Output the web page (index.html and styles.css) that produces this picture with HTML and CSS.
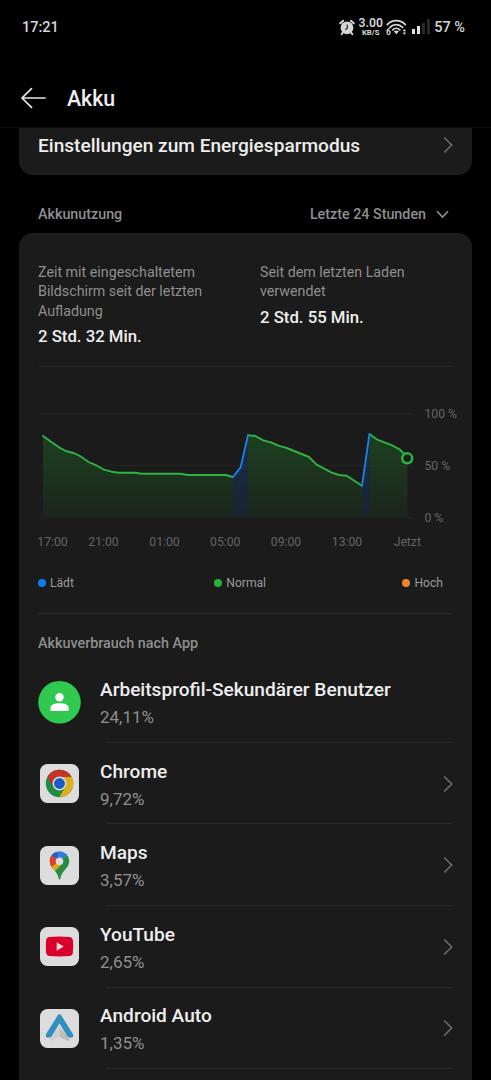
FILE: index.html
```html
<!DOCTYPE html>
<html lang="de">
<head>
<meta charset="utf-8">
<title>Akku</title>
<link rel="stylesheet" href="styles.css">
</head>
<body>
<div class="statusbar">
  <span class="clock">17:21</span>
  <div class="status-icons">
    <svg class="alarm" width="16" height="17" viewBox="0 0 16 17"><circle cx="8" cy="8.800" r="6.400" fill="#d6d6d6"/><path d="M1.200 4.300 4.200 1.700M14.800 4.300l-3-2.600M3.800 13.500 2.700 15.300M12.200 13.500l1.100 1.800" stroke="#d6d6d6" stroke-width="1.900" stroke-linecap="round"/><path d="M8.300 5.400v3.800L6.300 10.900" fill="none" stroke="#222" stroke-width="1.200"/></svg>
    <div class="speed"><b>3.00</b><small>KB/S</small></div>
    <svg class="wifi" width="21" height="17" viewBox="0 0 21 17"><g fill="none" stroke="#d6d6d6" stroke-width="1.800" stroke-linecap="round"><path d="M1.300 5.600C6 .4 14.500.4 19.300 5.600M4 8.300c3.500-3.700 9-3.700 12.600 0M6.800 10.900c2-2 5-2 7 0"/></g><path d="M7.700 12.300c1.500-1.200 3.800-1.200 5.300 0L10.300 15.200z" fill="#d6d6d6"/><path d="M16.500 12.300l1.900-2.200 1.900 2.200zM16.500 13.500h3.800l-1.900 2.200z" fill="#d6d6d6"/><text x="0" y="16" class="wifi-gen">6</text></svg>
    <svg class="signal" width="18" height="16" viewBox="0 0 18 16"><path d="M0 10h3v5H0zM5 7h3v8H5z" fill="#e2e2e2"/><path d="M10 4h3v11h-3zM15 0h3v15h-3z" fill="#282828"/></svg>
    <span class="percent">57 %</span>
  </div>
</div>
<header class="header">
  <svg width="26" height="22" viewBox="0 0 26 22"><path d="M10.500 1.600 1 11 10.500 20.400M1 11H24" fill="none" stroke="#e8e8e8" stroke-width="1.700" stroke-linecap="round" stroke-linejoin="round"/></svg>
  <h1>Akku</h1>
</header>
<main>
  <section class="card saver">
    <span>Einstellungen zum Energiesparmodus</span>
    <svg class="chevron" width="10" height="18" viewBox="0 0 10 18"><path d="M1.200 1.500 8.700 9l-7.500 7.500"/></svg>
  </section>
  <div class="section-head">
    <span>Akkunutzung</span>
    <div class="range"><span>Letzte 24 Stunden</span><svg width="13" height="9" viewBox="0 0 13 9"><path d="M1 1.300 6.500 7 12 1.300" fill="none" stroke="#929292" stroke-width="1.600"/></svg></div>
  </div>
  <section class="card usage">
    <div class="stats">
      <div><p>Zeit mit eingeschaltetem<br>Bildschirm seit der letzten<br>Aufladung</p><strong>2 Std. 32 Min.</strong></div>
      <div><p>Seit dem letzten Laden<br>verwendet</p><strong>2 Std. 55 Min.</strong></div>
    </div>
    <svg class="chart" width="425" height="190" viewBox="38 367 425 190">
      <defs>
        <linearGradient id="green" gradientUnits="userSpaceOnUse" x1="0" y1="434" x2="0" y2="517"><stop offset="0" stop-color="#1d4120"/><stop offset="1" stop-color="#1b251c"/></linearGradient>
        <linearGradient id="blue" gradientUnits="userSpaceOnUse" x1="0" y1="434" x2="0" y2="517"><stop offset="0" stop-color="#19304e"/><stop offset="1" stop-color="#1a2230"/></linearGradient>
      </defs>
      <g fill="url(#green)">
        <path d="M43 517V436L51 441.700 59 447.300 65.700 451 73.700 453 81 456.700 88.700 462 96.300 465.300 104 469.700 111.700 471.700 118.300 472.700H135L141.700 473.700H180.300L187.700 475H225.700L233 477V517z"/>
        <path d="M248 517V435.300L255.300 436 263.300 440.300 271 442.300 278.300 445.700 286.700 448 309 457 316.300 464.300 331.700 472.700 339 475 346.700 475.700 354.300 480.700 362 485.700V517z"/>
        <path d="M369.500 517V434L376.700 439.300 392.700 445.700 400 449.700 407.500 458V517z"/>
      </g>
      <g fill="url(#blue)"><path d="M233 517V477L240.500 467.700 248 435.300V517zM362 517V485.700L369.500 434V517z"/></g>
      <path d="M38 413.500H413M38 465.500H413M38 517.500H413" stroke="#fff" stroke-opacity=".04"/>
      <g fill="none" stroke-width="1.900" stroke-linejoin="round" stroke-linecap="round">
        <g stroke="#2fb344">
          <path d="M43 436 51 441.700 59 447.300 65.700 451 73.700 453 81 456.700 88.700 462 96.300 465.300 104 469.700 111.700 471.700 118.300 472.700H135L141.700 473.700H180.300L187.700 475H225.700L233 477"/>
          <path d="M248 435.300 255.300 436 263.300 440.300 271 442.300 278.300 445.700 286.700 448 309 457 316.300 464.300 331.700 472.700 339 475 346.700 475.700 354.300 480.700 362 485.700"/>
          <path d="M369.500 434 376.700 439.300 392.700 445.700 400 449.700 403.700 453.500"/>
        </g>
        <path d="M233 477 240.500 467.700 248 435.300M362 485.700 369.500 434" stroke="#1b7fe6"/>
      </g>
      <circle cx="407.200" cy="458.300" r="5" fill="#1b1f1b" stroke="#2fb344" stroke-width="2.500"/>
      <g class="axis">
        <text x="424.500" y="418">100 %</text><text x="424.500" y="470">50 %</text><text x="424.500" y="522">0 %</text>
        <g text-anchor="middle"><text x="52.500" y="546">17:00</text><text x="103.500" y="546">21:00</text><text x="164.500" y="546">01:00</text><text x="225.300" y="546">05:00</text><text x="286" y="546">09:00</text><text x="347" y="546">13:00</text><text x="407.300" y="546">Jetzt</text></g>
      </g>
    </svg>
    <div class="legend">
      <span class="key charging">Lädt</span><span class="key normal">Normal</span><span class="key high">Hoch</span>
    </div>
    <h2>Akkuverbrauch nach App</h2>
    <div class="apps">
      <div class="app">
        <svg class="icon" width="43" height="43" viewBox="0 0 43 43"><circle cx="21.500" cy="21.300" r="21.300" fill="#2fc94f"/><circle cx="21.500" cy="16.300" r="4.200" fill="#fff"/><path d="M12.500 30V26.700C12.500 20.900 30.600 20.900 30.600 26.700V30z" fill="#fff"/></svg>
        <div class="info"><b>Arbeitsprofil-Sekundärer Benutzer</b><span>24,11%</span></div>
      </div>
      <div class="app">
        <svg class="icon" width="43" height="43" viewBox="0 0 43 43"><rect x="2" y="2" width="39" height="39" rx="7.500" fill="#dcdcdc"/><circle cx="21.500" cy="21.500" r="13.700" fill="#238a43"/><path d="M21.500 14.800H33.500A13.700 13.700 0 0 1 21.300 35.200L27.300 24.900z" fill="#e0af1b"/><path d="M9.400 15A13.700 13.700 0 0 1 33.500 14.800H21.500L15.700 24.900z" fill="#c63228"/><circle cx="21.500" cy="21.500" r="6.900" fill="#dcdcdc"/><circle cx="21.500" cy="21.500" r="5.400" fill="#195cc8"/></svg>
        <div class="info"><b>Chrome</b><span>9,72%</span></div>
        <svg class="chevron" width="10" height="18" viewBox="0 0 10 18"><path d="M1.200 1.500 8.700 9l-7.500 7.500"/></svg>
      </div>
      <div class="app">
        <svg class="icon" width="43" height="43" viewBox="0 0 43 43"><defs><clipPath id="pin"><path d="M21.500 7.600c-5.500 0-9.700 4.300-9.700 9.600 0 7.500 8.300 9.600 8.800 17.300.1 1.300 1.700 1.300 1.800 0C22.900 26.800 31.200 24.700 31.200 17.200c0-5.300-4.200-9.600-9.700-9.600z"/></clipPath></defs><rect x="2" y="2" width="39" height="39" rx="7.500" fill="#dcdcdc"/><g clip-path="url(#pin)"><path d="M8 6h26v31H8z" fill="#248d43"/><path d="M21.500 17.200 13.500 10.500 8 10.500V26L13.500 25z" fill="#d9402d"/><path d="M21.500 17.200 12.600 23.500 12 29h3L24.500 19.500z" fill="#e0aa1b"/><path d="M21.500 17.200 13.600 10.600V5H35L29 11.500z" fill="#3b7be0"/><path d="M21.500 17.200 13.600 10.600 16 5 19 8z" fill="#2362c8"/></g><circle cx="21.500" cy="17.200" r="3.800" fill="#dcdcdc"/></svg>
        <div class="info"><b>Maps</b><span>3,57%</span></div>
        <svg class="chevron" width="10" height="18" viewBox="0 0 10 18"><path d="M1.200 1.500 8.700 9l-7.500 7.500"/></svg>
      </div>
      <div class="app">
        <svg class="icon" width="43" height="43" viewBox="0 0 43 43"><rect x="2" y="2" width="39" height="39" rx="7.500" fill="#dcdcdc"/><path d="M11.500 12q10-.8 20 0 3 .3 3.400 3.300.6 6.200 0 12.400-.4 3-3.400 3.300-10 .8-20 0-3-.3-3.400-3.300-.6-6.200 0-12.400.4-3 3.400-3.300z" fill="#db002b"/><path d="M18.700 17.300v8.400l7-4.200z" fill="#eadcdd"/></svg>
        <div class="info"><b>YouTube</b><span>2,65%</span></div>
        <svg class="chevron" width="10" height="18" viewBox="0 0 10 18"><path d="M1.200 1.500 8.700 9l-7.500 7.500"/></svg>
      </div>
      <div class="app">
        <svg class="icon" width="43" height="43" viewBox="0 0 43 43"><rect x="2" y="2" width="39" height="39" rx="7.500" fill="#dcdcdc"/><path d="M21.500 19.500 11.500 32q-.8 2 1.200 1.900L21.500 30z" fill="#cfcfcf"/><path d="M21.500 19.500 31.500 32q.8 2-1.200 1.900L21.500 30z" fill="#bdbdbd"/><path d="M19.800 8.200q1.700-2 3.400 0L35 27.300q.8 2.500-1 3.300h-2.500q-1.600-.3-2.500-1.800L21.500 16.300 14 28.800q-.9 1.500-2.500 1.800H9q-1.800-.8-1-3.300z" fill="#338ec0"/></svg>
        <div class="info"><b>Android Auto</b><span>1,35%</span></div>
        <svg class="chevron" width="10" height="18" viewBox="0 0 10 18"><path d="M1.200 1.500 8.700 9l-7.500 7.500"/></svg>
      </div>
    </div>
  </section>
</main>
</body>
</html>
```

FILE: styles.css
```css
* { box-sizing: border-box; }
body { margin: 0; width: 491px; height: 1080px; overflow: hidden; background: #000; color: #eee; font-family: Roboto, "Liberation Sans", sans-serif; }
svg { display: block; flex: none; }
h1, h2, p { margin: 0; }
.statusbar { height: 54px; display: flex; align-items: center; justify-content: space-between; padding: 0 26px 0 22px; }
.clock { font-size: 14.5px; font-weight: 500; color: #d6d6d6; }
.status-icons { display: flex; align-items: center; }
.speed { width: 24px; margin-left: 4px; display: flex; flex-direction: column; align-items: center; color: #d6d6d6; }
.speed b { font: 600 12.2px/10px Roboto, sans-serif; }
.speed small { font: 700 7.8px/7px Roboto, sans-serif; margin-top: 1px; }
.wifi { margin-left: 3px; }
.wifi-gen { font: 700 8.5px Roboto, sans-serif; fill: #d6d6d6; }
.signal { margin-left: 5px; }
.percent { margin-left: 4.5px; font-size: 14.5px; font-weight: 500; color: #d6d6d6; white-space: nowrap; }
.header { height: 74px; display: flex; align-items: center; gap: 20px; padding: 24px 21px 10px; border-bottom: 1px solid #0b0b0b; }
.header h1 { font-size: 21.3px; font-weight: 500; padding-top: 1px; }
main { padding: 0 19px; }
.card { background: #1b1b1b; padding: 0 19px; }
.saver { height: 47px; border-radius: 0 0 14px 14px; display: flex; justify-content: space-between; align-items: flex-start; padding-top: 7px; }
.saver span { font-size: 19.1px; line-height: 22px; font-weight: 500; }
.saver .chevron { margin-top: 1px; }
.chevron { fill: none; stroke: #707070; stroke-width: 1.5; }
.section-head { height: 58px; display: flex; justify-content: space-between; align-items: center; padding: 20px 23px 0 19px; font-size: 14.3px; font-weight: 500; color: #8f8f8f; }
.range { display: flex; align-items: center; gap: 10px; }
.usage { height: 860px; border-radius: 14px 14px 0 0; }
.stats { height: 134px; padding-top: 29.5px; display: grid; grid-template-columns: 222px 1fr; border-bottom: 1px solid #2a2a2a; }
.stats p { font-size: 14.25px; line-height: 19.5px; color: #8f8f8f; }
.stats strong { display: block; margin-top: 5px; font-size: 16.75px; line-height: 20px; font-weight: 500; }
.axis { font-size: 12.2px; fill: #656565; }
.legend { height: 57px; display: flex; justify-content: space-between; padding: 18px 10px 0 0; border-bottom: 1px solid #2a2a2a; }
.key { display: flex; align-items: center; gap: 4px; height: 16px; font-size: 12.1px; color: #9a9a9a; }
.key.normal { margin-left: 4px; }
.key::before { content: ""; width: 8px; height: 8px; border-radius: 50%; }
.charging::before { background: #0a7df0; }
.normal::before { background: #24b336; }
.high::before { background: #ee8427; }
.usage h2 { height: 47.3px; padding-top: 22px; font-size: 14.35px; line-height: 16px; font-weight: 500; color: #8f8f8f; }
.app { height: 81.6px; display: flex; align-items: center; position: relative; }
.info { margin-left: 19px; padding-top: 2px; flex: 1; display: flex; flex-direction: column; white-space: nowrap; }
.info b { font-size: 19.1px; line-height: 24px; font-weight: 500; }
.info span { margin-top: 4px; font-size: 17px; line-height: 22px; color: #8f8f8f; }
.app::after { content: ""; position: absolute; left: 68px; right: 0; bottom: 0; height: 1px; background: #2a2a2a; }
```
